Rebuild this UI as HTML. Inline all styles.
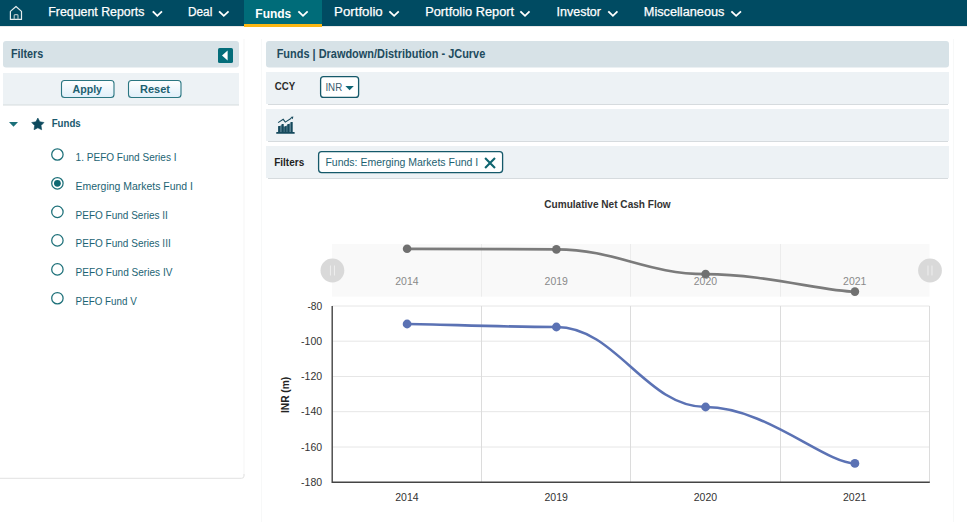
<!DOCTYPE html>
<html><head><meta charset="utf-8">
<style>
html,body{margin:0;padding:0;width:967px;height:522px;overflow:hidden;background:#fff}
svg{position:absolute;left:0;top:0;display:block}
text{font-family:"Liberation Sans",sans-serif;white-space:pre}
</style></head><body>
<svg width="967" height="522" viewBox="0 0 967 522">
<rect x="0" y="0" width="967" height="26" fill="#004b62"/>
<rect x="0" y="26" width="967" height="1" fill="#d9d9d9" opacity="0.6"/>
<rect x="244" y="0" width="78" height="24" fill="#006c79"/>
<rect x="244" y="24" width="78" height="3" fill="#fbb713"/>
<path d="M10.4 19.4 V11.4 L16 6.5 L21.5 11.4 V19.4 Z" fill="none" stroke="#e4eced" stroke-width="1.2" stroke-linejoin="round"/>
<path d="M14.2 19.3 V15.5 Q14.2 14.6 15.1 14.6 H17.1 Q18 14.6 18 15.5 V19.3" fill="none" stroke="#a9bec4" stroke-width="1.2"/>
<path d="M153.4 12.0 L157.3 15.8 L161.3 12.0" fill="none" stroke="#fff" stroke-width="1.8" stroke-linecap="square"/>
<path d="M219.7 12.0 L223.8 15.8 L227.9 12.0" fill="none" stroke="#fff" stroke-width="1.8" stroke-linecap="square"/>
<path d="M299.0 12.0 L303.0 15.8 L307.0 12.0" fill="none" stroke="#fff" stroke-width="1.8" stroke-linecap="square"/>
<path d="M390.0 12.0 L394.1 15.8 L398.1 12.0" fill="none" stroke="#fff" stroke-width="1.8" stroke-linecap="square"/>
<path d="M521.0 12.0 L525.0 15.8 L528.9 12.0" fill="none" stroke="#fff" stroke-width="1.8" stroke-linecap="square"/>
<path d="M608.9 12.0 L612.9 15.8 L616.8 12.0" fill="none" stroke="#fff" stroke-width="1.8" stroke-linecap="square"/>
<path d="M732.0 12.0 L736.1 15.8 L740.3 12.0" fill="none" stroke="#fff" stroke-width="1.8" stroke-linecap="square"/>
<path d="M244 39 V476" fill="none" stroke="#f5f5f5" stroke-width="1"/><path d="M244 474 V476 Q244 478.3 241.5 478.3 H0" fill="none" stroke="#e2e2e2" stroke-width="1"/>
<rect x="3" y="41" width="236" height="26.5" rx="3" fill="#d7e2e7"/>
<rect x="218" y="48" width="15" height="15" rx="1.6" fill="#046d7a"/>
<path d="M227.6 50.4 L222.0 55.4 L227.6 60.4 Z" fill="#fff"/>
<rect x="3" y="73" width="236" height="32" fill="#edf2f5"/>
<rect x="3" y="104.5" width="236" height="1" fill="#d6dbde"/>
<defs><linearGradient id="bg" x1="0" y1="0" x2="0" y2="1"><stop offset="0" stop-color="#ffffff"/><stop offset="1" stop-color="#dfeff9"/></linearGradient></defs>
<rect x="61.5" y="80.5" width="52.5" height="17" rx="3" fill="url(#bg)" stroke="#2a7681" stroke-width="1.1"/>
<rect x="128.5" y="80.5" width="52.5" height="17" rx="3" fill="url(#bg)" stroke="#2a7681" stroke-width="1.1"/>
<path d="M9 122 H18 L13.5 126.7 Z" fill="#1b707a"/>
<path d="M37.85 118.05 L39.82 121.79 L43.98 122.51 L41.04 125.54 L41.64 129.72 L37.85 127.85 L34.06 129.72 L34.66 125.54 L31.72 122.51 L35.88 121.79 Z" fill="#0d4a5e" stroke="#0d4a5e" stroke-width="0.6" stroke-linejoin="round"/>
<circle cx="57.4" cy="154.5" r="5.7" fill="none" stroke="#1d7079" stroke-width="1.25"/>
<circle cx="57.4" cy="183.3" r="5.7" fill="none" stroke="#1d7079" stroke-width="1.25"/>
<circle cx="57.4" cy="183.3" r="3.4" fill="#0e6872"/>
<circle cx="57.4" cy="211.9" r="5.7" fill="none" stroke="#1d7079" stroke-width="1.25"/>
<circle cx="57.4" cy="240.4" r="5.7" fill="none" stroke="#1d7079" stroke-width="1.25"/>
<circle cx="57.4" cy="269.4" r="5.7" fill="none" stroke="#1d7079" stroke-width="1.25"/>
<circle cx="57.4" cy="298.2" r="5.7" fill="none" stroke="#1d7079" stroke-width="1.25"/>
<path d="M261.5 39 V522 M953.5 39 V522" fill="none" stroke="#f7f8f8" stroke-width="1"/>
<rect x="266" y="41" width="683" height="26.5" rx="3" fill="#d7e2e7"/>
<rect x="266" y="72" width="683" height="32" fill="#edf2f5"/>
<rect x="268" y="104" width="680" height="1" fill="#d6dbde"/>
<rect x="266" y="109" width="683" height="32" fill="#edf2f5"/>
<rect x="268" y="141" width="680" height="1" fill="#d6dbde"/>
<rect x="266" y="146" width="683" height="32" fill="#edf2f5"/>
<rect x="268" y="178" width="680" height="1" fill="#d6dbde"/>
<rect x="320.6" y="76.6" width="38" height="20.8" rx="3" fill="#fff" stroke="#15596a" stroke-width="1.3"/>
<path d="M345.4 86 H353.8 L349.6 90.2 Z" fill="#0d6474"/>
<path d="M278.2 132 V127 L281.6 125 L284.5 127 L287.4 125 L290.5 123 V132 Z" fill="#5a8393"/>
<g fill="#15495c"><rect x="276.2" y="132" width="18.5" height="1.8" rx="0.6"/><rect x="278.2" y="126" width="2" height="6"/><rect x="281.6" y="124" width="2.1" height="8"/><rect x="284.5" y="126.2" width="2" height="5.8"/><rect x="287.4" y="124" width="2" height="8"/><rect x="290.5" y="122" width="2.2" height="10"/><path d="M290.5 116.9 L293.4 116.5 L292.7 119.3 Z"/></g>
<path d="M278.1 122.6 L283.2 119.3 L285.3 122.1 L291.3 118.2" fill="none" stroke="#15495c" stroke-width="1.1"/>
<rect x="318.6" y="151.6" width="184" height="21" rx="3" fill="#fff" stroke="#15596a" stroke-width="1.3"/>
<path d="M485.1 158.1 L495.0 168.0 M495.0 158.1 L485.1 168.0" stroke="#0f6570" stroke-width="2.1"/>
<rect x="332" y="244" width="597.5" height="52.7" fill="#f9f9f9"/>
<path d="M481.5 244 V296.7 M630.5 244 V296.7 M780.5 244 V296.7" stroke="#ececec" stroke-width="1"/>
<path d="M 407.10 248.80 C 436.96 248.80 496.70 249.40 556.40 249.40 C 616.10 249.40 645.90 274.10 705.60 274.10 C 765.30 274.10 825.04 291.60 854.90 291.60" fill="none" stroke="#7b7b7b" stroke-width="2.7"/>
<circle cx="407.1" cy="248.8" r="4.3" fill="#707070"/>
<circle cx="556.4" cy="249.4" r="4.3" fill="#707070"/>
<circle cx="705.6" cy="274.1" r="4.3" fill="#707070"/>
<circle cx="854.9" cy="291.6" r="4.3" fill="#707070"/>
<circle cx="332.4" cy="270.5" r="11.9" fill="#d9d9d9"/>
<path d="M330.4 265.5 V275.5 M334.4 265.5 V275.5" stroke="#f0f0f0" stroke-width="0.9"/>
<circle cx="930.0" cy="270.5" r="11.9" fill="#d9d9d9"/>
<path d="M928.0 265.5 V275.5 M932.0 265.5 V275.5" stroke="#f0f0f0" stroke-width="0.9"/>
<path d="M332 306.0 H929.5 M332 341.2 H929.5 M332 376.5 H929.5 M332 411.7 H929.5 M332 447.0 H929.5" stroke="#e6e6e6" stroke-width="1"/>
<path d="M481.5 306 V482 M630.5 306 V482 M780.5 306 V482 M929.5 306 V482" stroke="#dcdcdc" stroke-width="1"/>
<path d="M332.2 306 V482.2 H929.8" fill="none" stroke="#444444" stroke-width="1.4"/>
<path d="M 407.10 324.00 C 436.96 324.00 496.70 327.00 556.40 327.00 C 616.10 327.00 645.90 407.00 705.60 407.00 C 765.30 407.00 825.04 463.40 854.90 463.40" fill="none" stroke="#5b72b4" stroke-width="2.6"/>
<circle cx="407.1" cy="324.0" r="4.4" fill="#5b72b4"/>
<circle cx="556.4" cy="327.0" r="4.4" fill="#5b72b4"/>
<circle cx="705.6" cy="407.0" r="4.4" fill="#5b72b4"/>
<circle cx="854.9" cy="463.4" r="4.4" fill="#5b72b4"/>
<text id="nFR" x="48.30" y="15.80" font-size="12.5" font-weight="normal" fill="#ffffff" stroke="#fff" stroke-width="0.25" textLength="96.10" lengthAdjust="spacingAndGlyphs">Frequent Reports</text>
<text id="nDeal" x="187.90" y="15.80" font-size="12.5" font-weight="normal" fill="#ffffff" stroke="#fff" stroke-width="0.25" textLength="24.40" lengthAdjust="spacingAndGlyphs">Deal</text>
<text id="nFunds" x="255.30" y="17.70" font-size="13" font-weight="bold" fill="#ffffff" textLength="36.00" lengthAdjust="spacingAndGlyphs">Funds</text>
<text id="nPort" x="334.10" y="15.80" font-size="12.5" font-weight="normal" fill="#ffffff" stroke="#fff" stroke-width="0.25" textLength="48.60" lengthAdjust="spacingAndGlyphs">Portfolio</text>
<text id="nPR" x="425.20" y="15.80" font-size="12.5" font-weight="normal" fill="#ffffff" stroke="#fff" stroke-width="0.25" textLength="88.90" lengthAdjust="spacingAndGlyphs">Portfolio Report</text>
<text id="nInv" x="556.50" y="15.80" font-size="12.5" font-weight="normal" fill="#ffffff" stroke="#fff" stroke-width="0.25" textLength="44.50" lengthAdjust="spacingAndGlyphs">Investor</text>
<text id="nMisc" x="643.80" y="15.80" font-size="12.5" font-weight="normal" fill="#ffffff" stroke="#fff" stroke-width="0.25" textLength="80.60" lengthAdjust="spacingAndGlyphs">Miscellaneous</text>
<text id="lFilters" x="10.90" y="58.00" font-size="12.5" font-weight="bold" fill="#214b5e" textLength="32.30" lengthAdjust="spacingAndGlyphs">Filters</text>
<text id="apply" x="72.50" y="92.90" font-size="11.5" font-weight="bold" fill="#1d5f70" textLength="29.50" lengthAdjust="spacingAndGlyphs">Apply</text>
<text id="reset" x="140.00" y="92.90" font-size="11.5" font-weight="bold" fill="#1d5f70" textLength="30.00" lengthAdjust="spacingAndGlyphs">Reset</text>
<text id="tFunds" x="51.70" y="126.80" font-size="10.5" font-weight="bold" fill="#1b5a6e" textLength="29.00" lengthAdjust="spacingAndGlyphs">Funds</text>
<text id="r1" x="75.60" y="161.00" font-size="11" font-weight="normal" fill="#1b6373" textLength="100.90" lengthAdjust="spacingAndGlyphs">1. PEFO Fund Series I</text>
<text id="r2" x="75.60" y="189.70" font-size="11" font-weight="normal" fill="#1b6373" textLength="117.40" lengthAdjust="spacingAndGlyphs">Emerging Markets Fund I</text>
<text id="r3" x="75.60" y="218.50" font-size="11" font-weight="normal" fill="#1b6373" textLength="92.30" lengthAdjust="spacingAndGlyphs">PEFO Fund Series II</text>
<text id="r4" x="75.60" y="247.00" font-size="11" font-weight="normal" fill="#1b6373" textLength="95.10" lengthAdjust="spacingAndGlyphs">PEFO Fund Series III</text>
<text id="r5" x="75.60" y="275.80" font-size="11" font-weight="normal" fill="#1b6373" textLength="96.80" lengthAdjust="spacingAndGlyphs">PEFO Fund Series IV</text>
<text id="r6" x="75.60" y="304.60" font-size="11" font-weight="normal" fill="#1b6373" textLength="61.20" lengthAdjust="spacingAndGlyphs">PEFO Fund V</text>
<text id="title" x="276.70" y="58.30" font-size="12.5" font-weight="bold" fill="#214b5e" textLength="208.60" lengthAdjust="spacingAndGlyphs">Funds | Drawdown/Distribution - JCurve</text>
<text id="ccy" x="274.70" y="90.10" font-size="11" font-weight="bold" fill="#2a2a2a" textLength="20.40" lengthAdjust="spacingAndGlyphs">CCY</text>
<text id="inr" x="325.40" y="91.10" font-size="11.5" font-weight="normal" fill="#3b5c70" textLength="16.80" lengthAdjust="spacingAndGlyphs">INR</text>
<text id="filt" x="274.20" y="166.10" font-size="11.5" font-weight="bold" fill="#222222" textLength="30.00" lengthAdjust="spacingAndGlyphs">Filters</text>
<text id="tag" x="325.40" y="166.10" font-size="11" font-weight="normal" fill="#1d6171" textLength="152.90" lengthAdjust="spacingAndGlyphs">Funds: Emerging Markets Fund I</text>
<text id="ctitle" x="544.30" y="207.70" font-size="10.5" font-weight="bold" fill="#333333" textLength="126.40" lengthAdjust="spacingAndGlyphs">Cumulative Net Cash Flow</text>
<text id="y80" x="307.40" y="310.00" font-size="10.5" font-weight="normal" fill="#333333" textLength="14.80" lengthAdjust="spacingAndGlyphs">-80</text>
<text id="y100" x="301.10" y="344.80" font-size="10.5" font-weight="normal" fill="#333333" textLength="21.10" lengthAdjust="spacingAndGlyphs">-100</text>
<text id="y120" x="301.10" y="379.90" font-size="10.5" font-weight="normal" fill="#333333" textLength="21.10" lengthAdjust="spacingAndGlyphs">-120</text>
<text id="y140" x="301.10" y="415.00" font-size="10.5" font-weight="normal" fill="#333333" textLength="21.10" lengthAdjust="spacingAndGlyphs">-140</text>
<text id="y160" x="301.10" y="451.30" font-size="10.5" font-weight="normal" fill="#333333" textLength="21.00" lengthAdjust="spacingAndGlyphs">-160</text>
<text id="y180" x="301.10" y="485.80" font-size="10.5" font-weight="normal" fill="#333333" textLength="21.00" lengthAdjust="spacingAndGlyphs">-180</text>
<text id="x14" x="395.20" y="500.90" font-size="10.5" font-weight="normal" fill="#333333" textLength="23.40" lengthAdjust="spacingAndGlyphs">2014</text>
<text id="x19" x="544.50" y="500.90" font-size="10.5" font-weight="normal" fill="#333333" textLength="23.40" lengthAdjust="spacingAndGlyphs">2019</text>
<text id="x20" x="693.70" y="500.90" font-size="10.5" font-weight="normal" fill="#333333" textLength="23.40" lengthAdjust="spacingAndGlyphs">2020</text>
<text id="x21" x="843.00" y="500.90" font-size="10.5" font-weight="normal" fill="#333333" textLength="23.40" lengthAdjust="spacingAndGlyphs">2021</text>
<text id="nx14" x="395.30" y="284.80" font-size="10.5" font-weight="normal" fill="#8a8a8a" textLength="23.30" lengthAdjust="spacingAndGlyphs">2014</text>
<text id="nx19" x="544.60" y="284.80" font-size="10.5" font-weight="normal" fill="#8a8a8a" textLength="23.30" lengthAdjust="spacingAndGlyphs">2019</text>
<text id="nx20" x="693.80" y="284.80" font-size="10.5" font-weight="normal" fill="#8a8a8a" textLength="23.30" lengthAdjust="spacingAndGlyphs">2020</text>
<text id="nx21" x="843.10" y="284.80" font-size="10.5" font-weight="normal" fill="#8a8a8a" textLength="23.30" lengthAdjust="spacingAndGlyphs">2021</text>
<text id="inrm" x="0" y="0" transform="translate(289.30 413.00) rotate(-90)" font-size="10" font-weight="bold" fill="#222" textLength="36.20" lengthAdjust="spacingAndGlyphs">INR (m)</text>
</svg>
</body></html>
